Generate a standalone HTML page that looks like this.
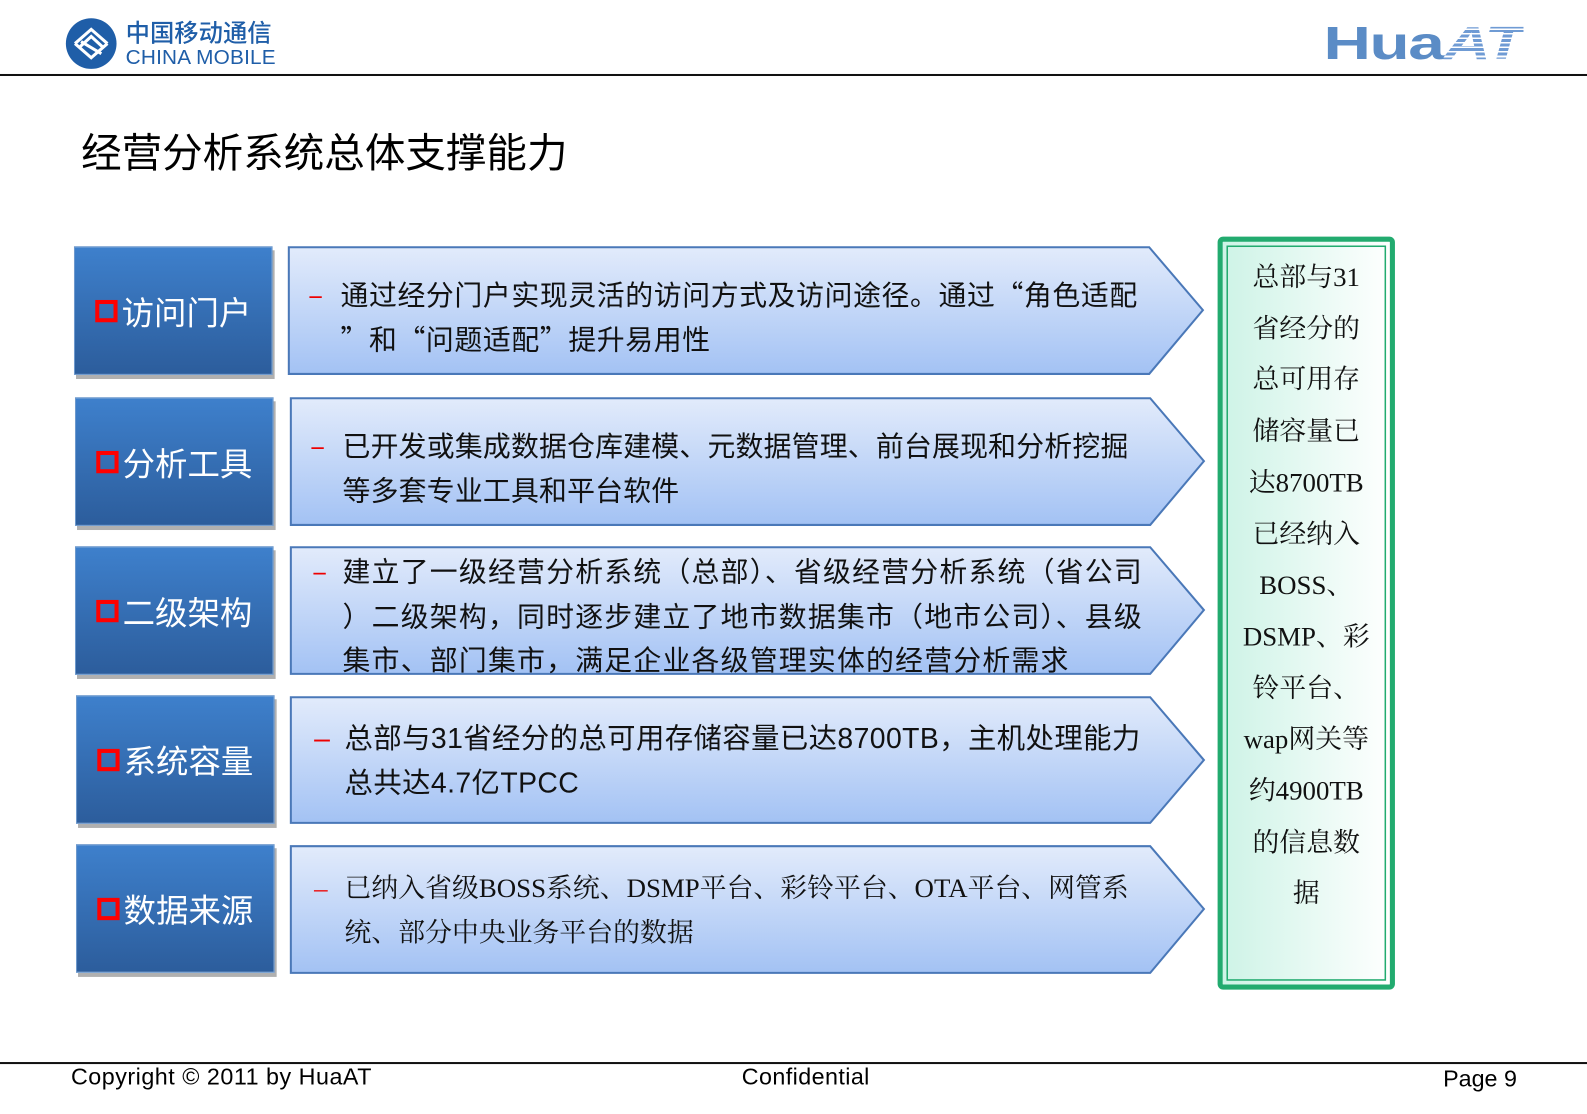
<!DOCTYPE html>
<html><head><meta charset="utf-8"><style>
body{margin:0;width:1587px;height:1099px;background:#fff;position:relative;overflow:hidden;font-family:"Liberation Sans","Noto Sans CJK SC",sans-serif}
#w{position:absolute;left:0;top:0;width:1587px;height:1099px;transform:scale(1.0134);transform-origin:0 0}
.abs{position:absolute}
.lbl{position:absolute;width:196px;height:127px;background:linear-gradient(#3e80cc,#2c5d9c);box-shadow:2px 4px 0 #b0b0b0;color:#fff;font-size:32px;display:flex;align-items:center;justify-content:center;box-sizing:border-box;border:1px solid #6c98cc}
.lbl i{display:inline-block;width:14px;height:14px;border:4px solid #f00;margin-right:4px}
.txt{position:absolute;left:0;font-size:27.5px;letter-spacing:0.6px;line-height:43.5px;color:#111;white-space:nowrap;font-family:"Noto Sans CJK SC",sans-serif}
.txt b{font-weight:normal;color:#e00;position:absolute;left:20px}
.hua{font-family:"Liberation Sans",sans-serif;font-weight:bold;font-size:46px;color:#5b8cc6;transform:scaleX(1.41);transform-origin:0 0;letter-spacing:-1px;line-height:46px}
.at{background:repeating-linear-gradient(#6f9bd4 0 3px,#fff 3px 4.5px);-webkit-background-clip:text;background-clip:text;color:transparent;font-style:italic}
.ft{position:absolute;font-size:23px}
</style></head><body><div id="w">
<svg class="abs" style="left:64px;top:17px" width="52" height="52" viewBox="0 0 52 52"><circle cx="26" cy="26" r="25" fill="#1f5ea8"/><path d="M10 26 L26 12 L42 26 M14 30 L26 19 L38 30 M10 26 L26 40 L42 26 M16 24 L36 36" stroke="#fff" stroke-width="3" fill="none"/></svg>
<div class="abs" style="left:124px;top:18px;font-size:24px;color:#1f5ea8;line-height:26px;font-family:'Noto Sans CJK SC',sans-serif;font-weight:500">中国移动通信</div>
<div class="abs" style="left:124px;top:45px;font-size:20.5px;color:#1f5ea8;letter-spacing:0.2px">CHINA MOBILE</div>
<div class="abs hua" style="left:1306px;top:19px">Hua<span class="at">AT</span></div>
<div class="abs" style="left:0;top:73px;width:1587px;height:2px;background:#111"></div>
<div class="abs" style="left:80px;top:119px;font-size:40px;color:#000;font-family:'Noto Sans CJK SC',sans-serif">经营分析系统总体支撑能力</div>

<svg class="abs" style="left:0;top:0" width="1587" height="1099">
<defs><linearGradient id="g" x1="0" y1="0" x2="0" y2="1"><stop offset="0" stop-color="#e2ebfb"/><stop offset="1" stop-color="#a3c2f4"/></linearGradient>
<linearGradient id="gg" x1="0" y1="0" x2="1" y2="0"><stop offset="0" stop-color="#cdf3e6"/><stop offset="1" stop-color="#ffffff"/></linearGradient></defs>
<g stroke="#4a78b8" stroke-width="2" fill="url(#g)">
<path d="M285 244 H1134 L1187 306 L1134 369 H285 Z"/>
<path d="M287 393 H1135 L1188 455 L1135 518 H287 Z"/>
<path d="M287 540 H1135 L1188 602 L1135 665 H287 Z"/>
<path d="M287 688 H1135 L1188 750 L1135 812 H287 Z"/>
<path d="M287 835 H1135 L1188 897 L1135 960 H287 Z"/>
</g>
<rect x="1204" y="236" width="170" height="738" rx="3" fill="url(#gg)" stroke="#22ab6f" stroke-width="5"/>
<rect x="1211" y="243" width="156" height="724" fill="none" stroke="#22ab6f" stroke-width="1.5"/>
</svg>

<div class="lbl" style="left:73px;top:243px"><i></i>访问门户</div>
<div class="lbl" style="left:74px;top:392px"><i></i>分析工具</div>
<div class="lbl" style="left:74px;top:539px"><i></i>二级架构</div>
<div class="lbl" style="left:75px;top:686px"><i></i>系统容量</div>
<div class="lbl" style="left:75px;top:833px"><i></i>数据来源</div>

<div class="abs" style="left:284px;top:268px"><div class="txt" style="padding-left:52px"><b>–</b>通过经分门户实现灵活的访问方式及访问途径。通过“角色适配<br>”和“问题适配”提升易用性</div></div>
<div class="abs" style="left:286px;top:417px"><div class="txt" style="padding-left:52px;letter-spacing:0.2px"><b>–</b>已开发或集成数据仓库建模、元数据管理、前台展现和分析挖掘<br>等多套专业工具和平台软件</div></div>
<div class="abs" style="left:288px;top:541px"><div class="txt" style="padding-left:50px;letter-spacing:1.2px"><b>–</b>建立了一级经营分析系统（总部）、省级经营分析系统（省公司<br>）二级架构，同时逐步建立了地市数据集市（地市公司）、县级<br>集市、部门集市，满足企业各级管理实体的经营分析需求</div></div>
<div class="abs" style="left:290px;top:707px"><div class="txt" style="padding-left:50px;font-family:'Liberation Sans','Noto Sans CJK SC',sans-serif;font-size:28px;letter-spacing:0.4px"><b>–</b>总部与31省经分的总可用存储容量已达8700TB，主机处理能力<br>总共达4.7亿TPCC</div></div>
<div class="abs" style="left:290px;top:855px"><div class="txt" style="padding-left:50px;font-family:'Liberation Serif','Noto Serif CJK SC',serif;font-size:26.5px;letter-spacing:0"><b>–</b>已纳入省级BOSS系统、DSMP平台、彩铃平台、OTA平台、网管系<br>统、部分中央业务平台的数据</div></div>

<div class="abs" style="left:1214px;top:248px;width:150px;text-align:center;font-family:'Liberation Serif','Noto Serif CJK SC',serif;font-size:26.5px;line-height:50.7px;color:#111">总部与31<br>省经分的<br>总可用存<br>储容量已<br>达8700TB<br>已经纳入<br>BOSS、<br>DSMP、彩<br>铃平台、<br>wap网关等<br>约4900TB<br>的信息数<br>据</div>

<div class="abs" style="left:0;top:1048px;width:1587px;height:2px;background:#111"></div>
<div class="ft" style="left:70px;top:1049px;letter-spacing:0.5px">Copyright © 2011 by HuaAT</div>
<div class="ft" style="left:732px;top:1049px;letter-spacing:0.4px">Confidential</div>
<div class="ft" style="left:1424px;top:1051px">Page 9</div>
</div></body></html>
